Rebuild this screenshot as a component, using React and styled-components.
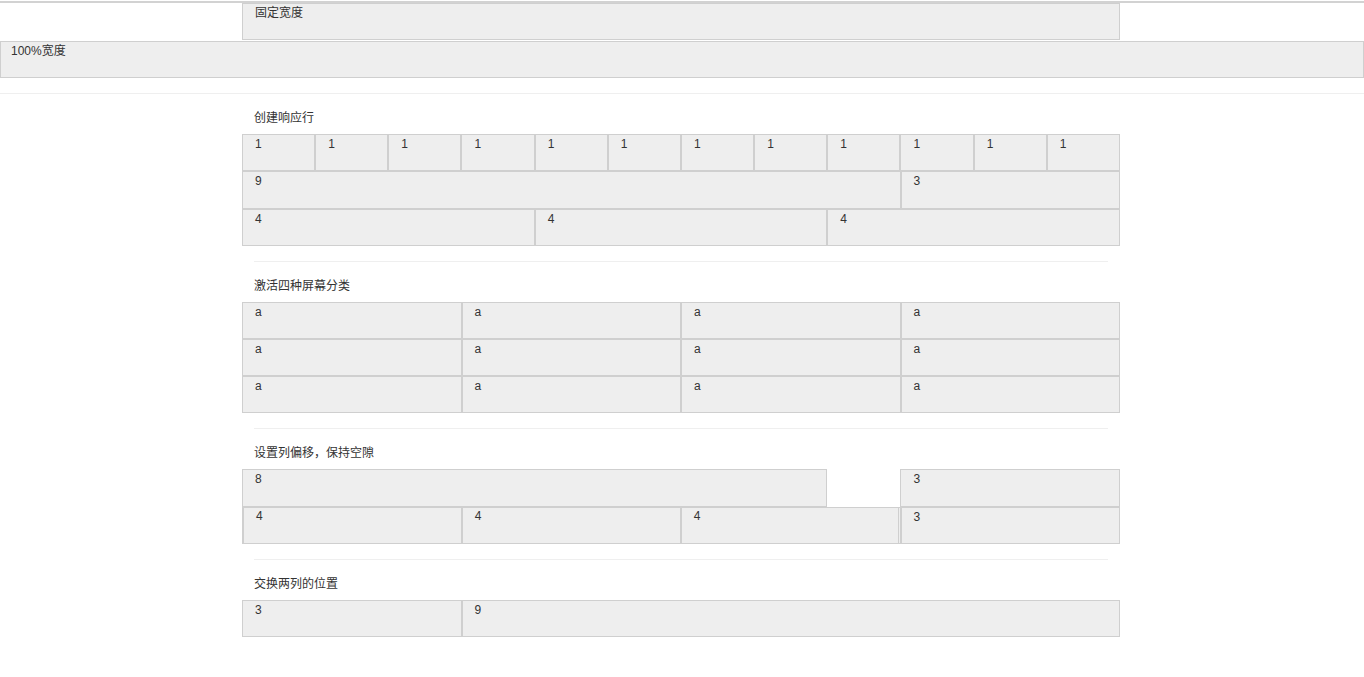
import React from "react";
import styled, { createGlobalStyle } from "styled-components";

const GlobalStyle = createGlobalStyle`
  html, body { margin: 0; padding: 0; background: #fff; }
  body {
    font-family: "Liberation Sans", "Noto Sans CJK SC", sans-serif;
    font-size: 12px;
    line-height: 17px;
    color: #333;
  }
  * { box-sizing: border-box; }
`;

const Page = styled.div`
  margin-top: 1px;
  border-top: 2px solid #d2d2d2;
  padding-bottom: 40px;
`;

const Box = styled.div`
  height: 37px;
  background: #eeeeee;
  border: 1px solid #cfcfcf;
  padding: 1px ${(p) => (p.$full ? "10px" : "12px")};
  width: ${(p) => (p.$full ? "100%" : "878px")};
  margin: ${(p) => (p.$full ? "1px 0 0" : "0 0 0 calc(50% - 440px)")};
`;

const FullRule = styled.div`
  height: 1px;
  background: #efefef;
  margin-top: 15px;
`;

const Container = styled.div`
  width: 878px;
  margin-left: calc(50% - 440px);
`;

const Section = styled.section`
  display: flex;
  flex-direction: column;
`;

const Rule = styled.div`
  height: 1px;
  background: #efefef;
  margin: 15px 12px 0;
`;

const Label = styled.div`
  padding-left: 12px;
  margin-top: 16px;
  margin-bottom: 7px;
  height: 17px;
`;

const Row = styled.div`
  display: grid;
  grid-template-columns: repeat(12, 1fr);
  height: ${(p) => p.$h || 37}px;
`;

const Cell = styled.div`
  grid-column: ${(p) => (p.$offset ? `${p.$offset + 1} / span ${p.$span}` : `span ${p.$span}`)};
  height: 100%;
  background: #eeeeee;
  border: 1px solid #cfcfcf;
  padding: 1px 12px;
`;

const Nested = styled.div`
  grid-column: span ${(p) => p.$span};
  height: 100%;
  border: 1px solid #cfcfcf;
  background: #eeeeee;
  display: grid;
  grid-template-columns: repeat(3, 1fr);
`;

const InnerCell = styled.div`
  height: 100%;
  background: #eeeeee;
  border-left: 1px solid #cfcfcf;
  border-right: 1px solid #cfcfcf;
  padding: 0 12px;
`;

export default function App() {
  const ones = Array.from({ length: 12 }, (_, i) => i);
  const quads = [0, 1, 2];
  return (
    <Page>
      <GlobalStyle />
      <Box>固定宽度</Box>
      <Box $full>100%宽度</Box>
      <FullRule />
      <Container>
        <Section>
          <Label>创建响应行</Label>
          <Row>
            {ones.map((i) => (
              <Cell key={i} $span={1}>1</Cell>
            ))}
          </Row>
          <Row $h={38}>
            <Cell $span={9}>9</Cell>
            <Cell $span={3}>3</Cell>
          </Row>
          <Row>
            <Cell $span={4}>4</Cell>
            <Cell $span={4}>4</Cell>
            <Cell $span={4}>4</Cell>
          </Row>
        </Section>
        <Rule />
        <Section>
          <Label>激活四种屏幕分类</Label>
          {quads.map((r) => (
            <Row key={r}>
              <Cell $span={3}>a</Cell>
              <Cell $span={3}>a</Cell>
              <Cell $span={3}>a</Cell>
              <Cell $span={3}>a</Cell>
            </Row>
          ))}
        </Section>
        <Rule />
        <Section>
          <Label>设置列偏移，保持空隙</Label>
          <Row $h={38}>
            <Cell $span={8}>8</Cell>
            <Cell $span={3} $offset={9}>3</Cell>
          </Row>
          <Row>
            <Nested $span={9}>
              <InnerCell>4</InnerCell>
              <InnerCell>4</InnerCell>
              <InnerCell>4</InnerCell>
            </Nested>
            <Cell $span={3}>3</Cell>
          </Row>
        </Section>
        <Rule />
        <Section>
          <Label>交换两列的位置</Label>
          <Row>
            <Cell $span={3}>3</Cell>
            <Cell $span={9}>9</Cell>
          </Row>
        </Section>
      </Container>
    </Page>
  );
}
